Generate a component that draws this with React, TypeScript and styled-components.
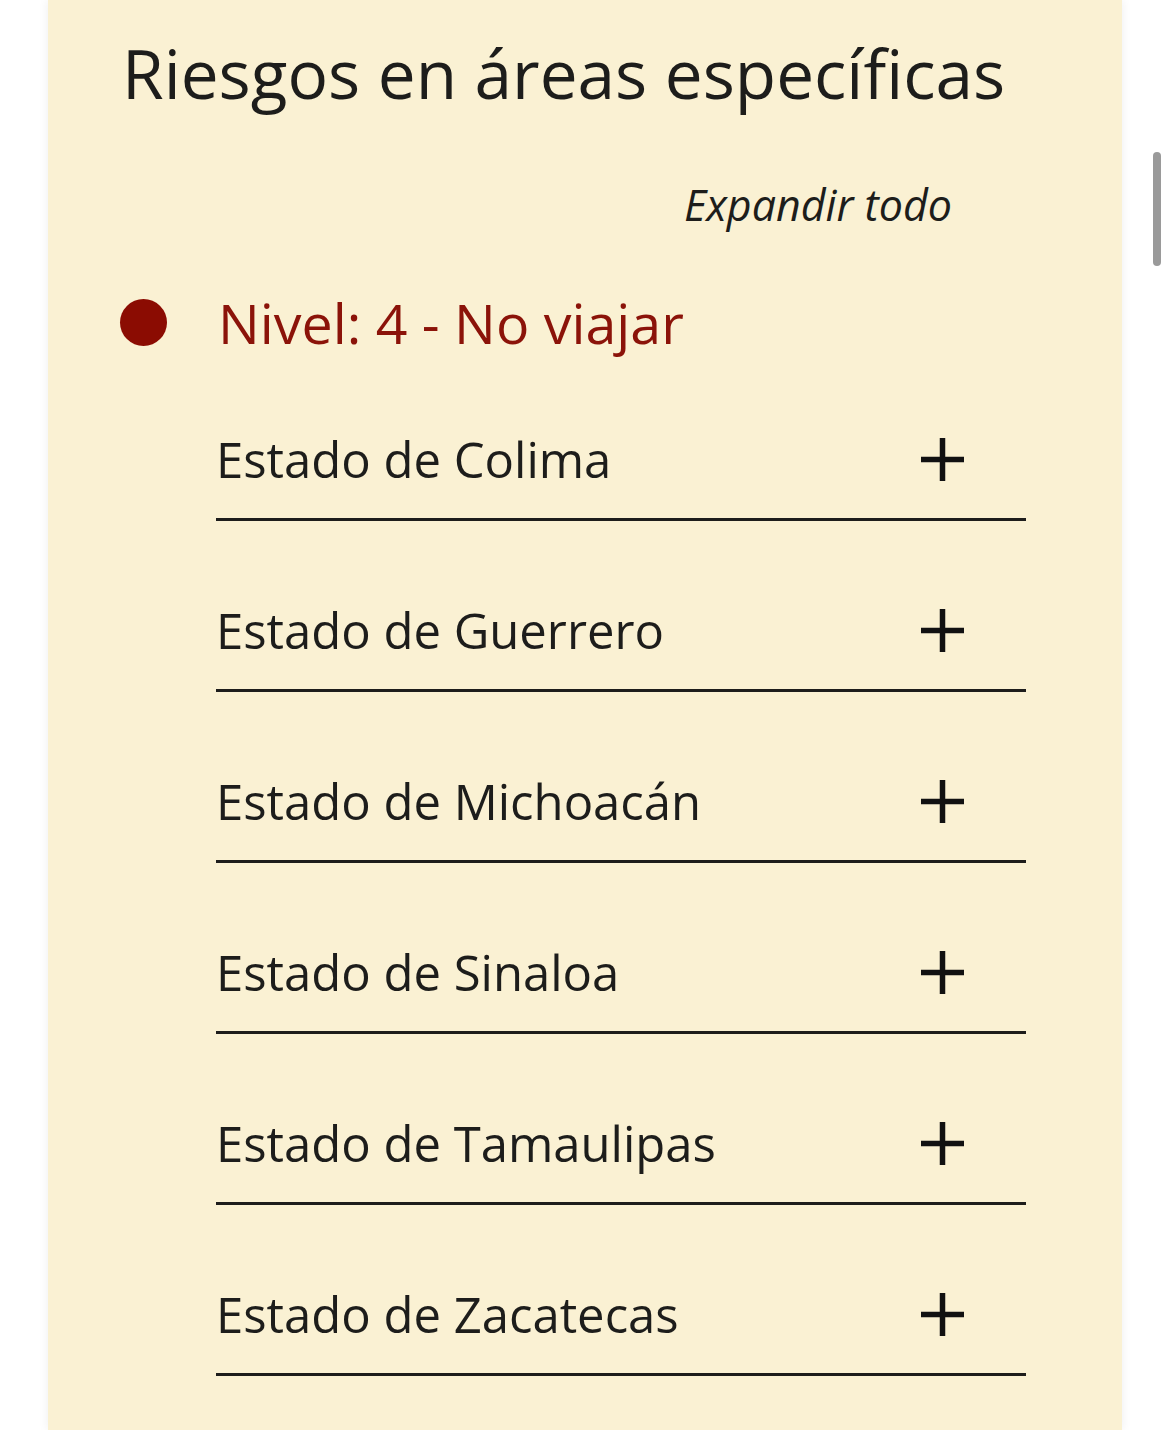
import styled, { createGlobalStyle } from "styled-components"

const GlobalStyle = createGlobalStyle`
  html, body {
    margin: 0;
    padding: 0;
    background: #ffffff;
    font-family: "Open Sans", "Noto Sans", sans-serif;
  }
`

const states = [
  "Estado de Colima",
  "Estado de Guerrero",
  "Estado de Michoacán",
  "Estado de Sinaloa",
  "Estado de Tamaulipas",
  "Estado de Zacatecas",
]

const Page = styled.div`
  position: relative;
  width: 1170px;
  height: 1430px;
  overflow: hidden;
  background: #ffffff;
`

const Panel = styled.section`
  margin-left: 48px;
  width: 1074px;
  min-height: 1430px;
  background: #faf1d3;
  box-shadow: 0 0 10px rgba(0, 0, 0, 0.07);
  padding: 33px 0 0 74px;
  box-sizing: border-box;
`

const Title = styled.h2`
  margin: 0;
  font-size: 67.5px;
  font-weight: 400;
  line-height: 1.2;
  color: #1d1d1b;
`

const ExpandRow = styled.div`
  display: flex;
  justify-content: flex-end;
  width: 830px;
  margin-top: 61px;
`

const ExpandLink = styled.button`
  border: none;
  background: none;
  padding: 0;
  font-family: inherit;
  font-style: italic;
  font-size: 43px;
  line-height: normal;
  color: #1d1d1b;
  cursor: pointer;
`

const LevelHeader = styled.div`
  display: flex;
  align-items: center;
  gap: 51px;
  margin-top: 61px;
  margin-left: -2px;
`

const Dot = styled.span<{ $color: string }>`
  width: 47px;
  height: 47px;
  border-radius: 50%;
  background: ${(p) => p.$color};
  flex: none;
`

const LevelTitle = styled.h3<{ $color: string }>`
  margin: 0;
  font-size: 55.5px;
  font-weight: 400;
  line-height: 1;
  color: ${(p) => p.$color};
`

const List = styled.ul`
  list-style: none;
  margin: 0 0 0 94px;
  padding: 0;
  width: 810px;
`

const Item = styled.li`
  display: flex;
  align-items: center;
  justify-content: space-between;
  border-bottom: 3px solid #1d1d1b;
  padding: 79.2px 62px 30px 0;
`

const ItemLabel = styled.span`
  font-size: 49px;
  color: #1d1d1b;
  line-height: 1.2;
`

const PlusIcon = () => (
  <svg width="43" height="43" viewBox="0 0 43 43">
    <path d="M21.5 0v43M0 21.5h43" stroke="#111" strokeWidth="5.5" fill="none" />
  </svg>
)

const Scrollbar = styled.div`
  position: absolute;
  right: 9px;
  top: 152px;
  width: 8px;
  height: 114px;
  border-radius: 4px;
  background: #9a9a9a;
`

export default function App() {
  return (
    <Page>
      <GlobalStyle />
      <Panel>
        <Title>Riesgos en áreas específicas</Title>
        <ExpandRow>
          <ExpandLink>Expandir todo</ExpandLink>
        </ExpandRow>
        <LevelHeader>
          <Dot $color="#8b0c02" />
          <LevelTitle $color="#8b1309">Nivel: 4 - No viajar</LevelTitle>
        </LevelHeader>
        <List>
          {states.map((s) => (
            <Item key={s}>
              <ItemLabel>{s}</ItemLabel>
              <PlusIcon />
            </Item>
          ))}
        </List>
      </Panel>
      <Scrollbar />
    </Page>
  )
}
